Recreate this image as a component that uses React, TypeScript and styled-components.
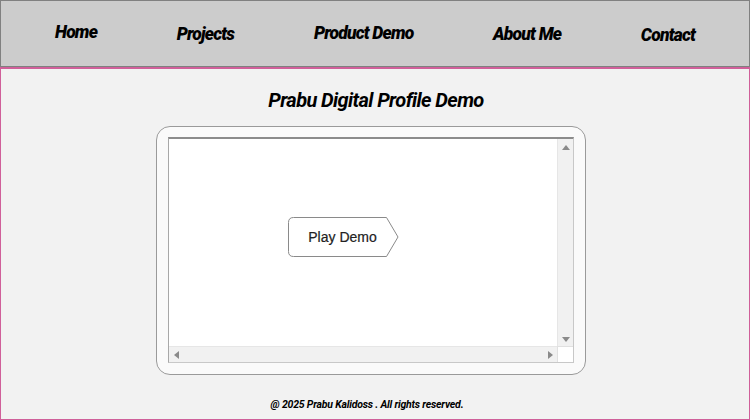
import styled, { createGlobalStyle } from 'styled-components';

const GlobalStyle = createGlobalStyle`
    html, body {
        margin: 0;
        padding: 0;
        background: #f2f2f2;
    }
    * {
        box-sizing: border-box;
    }
`;

const Page = styled.div`
    width: 750px;
    height: 420px;
    display: flex;
    flex-direction: column;
    font-family: Roboto, "Liberation Sans", sans-serif;
`;

const Header = styled.header`
    height: 67px;
    background: #cccccc;
    border: 1px solid #808080;
`;

const NavList = styled.ul`
    list-style: none;
    margin: 0;
    padding: 0 54px 0 54px;
    height: 100%;
    display: flex;
    justify-content: space-between;
    align-items: center;
`;

const NavItem = styled.li<{ $drop: number }>`
    font-size: 17.5px;
    font-weight: 900;
    font-style: italic;
    letter-spacing: -0.8px;
    color: #000;
    margin-top: ${p => p.$drop}px;
    cursor: pointer;
`;

const Main = styled.main`
    flex: 1;
    background: #f2f2f2;
    border: 1px solid #d0609a;
    border-top-width: 2px;
    display: flex;
    flex-direction: column;
    padding-top: 19px;
`;

const Title = styled.h1`
    margin: 0 0 14px 0;
    text-align: center;
    font-size: 20px;
    line-height: 24px;
    font-weight: 700;
    font-style: italic;
    letter-spacing: -0.6px;
    color: #000;
    padding-left: 2px;
`;

const Card = styled.div`
    width: 430px;
    height: 249px;
    margin-left: 155px;
    padding: 10px 11px 11px 11px;
    background: #fafafa;
    border: 1px solid #9a9a9a;
    border-radius: 14px;
`;

const Frame = styled.div`
    width: 100%;
    height: 100%;
    border: 1px solid #c8c8c8;
    border-top: 2px solid #8c8c8c;
    border-left-color: #a8a8a8;
    display: grid;
    grid-template-columns: 1fr 16px;
    grid-template-rows: 1fr 16px;
    background: #fff;
`;

const Viewport = styled.div`
    background: #fff;
    padding: 78px 0 0 119px;
`;

const ScrollTrack = styled.div<{ $dir: 'v' | 'h' }>`
    background: #f1f1f1;
    display: flex;
    flex-direction: ${p => (p.$dir === 'v' ? 'column' : 'row')};
    justify-content: space-between;
    align-items: center;
    padding: ${p => (p.$dir === 'v' ? '6px 0 4px' : '0 4px 0 5px')};
    border-${p => (p.$dir === 'v' ? 'left' : 'top')}: 1px solid #e6e6e6;
`;

const Corner = styled.div`
    background: #fff;
    border-left: 1px solid #e0e0e0;
    border-top: 1px solid #e0e0e0;
`;

const Arrow = styled.span<{ $to: 'up' | 'down' | 'left' | 'right' }>`
    width: 0;
    height: 0;
    border: 4px solid transparent;
    ${p => p.$to === 'up' && 'border-bottom: 5px solid #8a8a8a; border-top-width: 0;'}
    ${p => p.$to === 'down' && 'border-top: 5px solid #8a8a8a; border-bottom-width: 0;'}
    ${p => p.$to === 'left' && 'border-right: 5px solid #8a8a8a; border-left-width: 0;'}
    ${p => p.$to === 'right' && 'border-left: 5px solid #8a8a8a; border-right-width: 0;'}
`;

const PlayButton = styled.button`
    position: relative;
    width: 111px;
    height: 40px;
    padding: 0 2px 0 0;
    border: none;
    background: transparent;
    font-family: "Liberation Sans", Arial, sans-serif;
    font-size: 14px;
    color: #222;
    -webkit-text-stroke: 0.2px #222;
    cursor: pointer;

    svg {
        position: absolute;
        left: 0;
        top: 0;
    }
    span {
        position: relative;
    }
`;

const Footer = styled.footer`
    margin-top: auto;
    padding-bottom: 8px;
    text-align: center;
    font-size: 10.5px;
    font-weight: 700;
    font-style: italic;
    letter-spacing: -0.2px;
    color: #000;
    padding-right: 16px;
`;

const navLinks = [
    { label: 'Home', drop: -4 },
    { label: 'Projects', drop: 0 },
    { label: 'Product Demo', drop: -2 },
    { label: 'About Me', drop: 0 },
    { label: 'Contact', drop: 2 },
];

export default function App() {
    return (
        <Page>
            <GlobalStyle />
            <Header>
                <NavList>
                    {navLinks.map(link => (
                        <NavItem key={link.label} $drop={link.drop}>{link.label}</NavItem>
                    ))}
                </NavList>
            </Header>
            <Main>
                <Title>Prabu Digital Profile Demo</Title>
                <Card>
                    <Frame>
                        <Viewport>
                            <PlayButton>
                                <svg width="111" height="40" viewBox="0 0 111 40">
                                    <path
                                        d="M5.5 0.5 H98.5 L110 20 L98.5 39.5 H5.5 Q0.5 39.5 0.5 34.5 V5.5 Q0.5 0.5 5.5 0.5 Z"
                                        fill="#fff"
                                        stroke="#8a8a8a"
                                    />
                                </svg>
                                <span>Play Demo</span>
                            </PlayButton>
                        </Viewport>
                        <ScrollTrack $dir="v">
                            <Arrow $to="up" />
                            <Arrow $to="down" />
                        </ScrollTrack>
                        <ScrollTrack $dir="h">
                            <Arrow $to="left" />
                            <Arrow $to="right" />
                        </ScrollTrack>
                        <Corner />
                    </Frame>
                </Card>
                <Footer>@ 2025 Prabu Kalidoss . All rights reserved.</Footer>
            </Main>
        </Page>
    );
}
